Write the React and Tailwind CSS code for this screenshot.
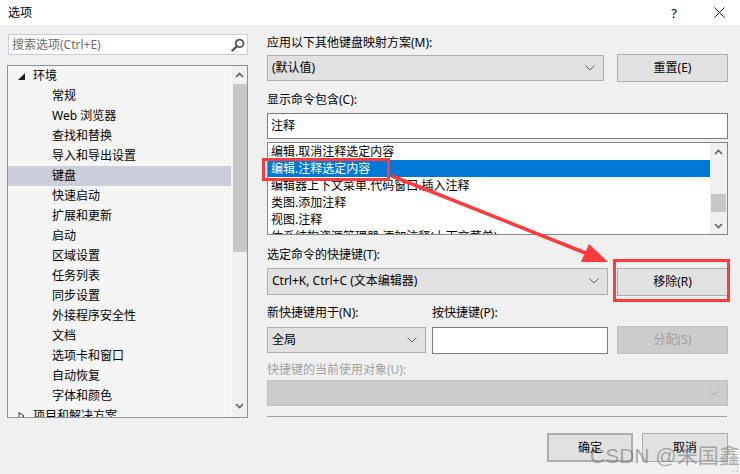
import React from 'react';

const font = { fontFamily: '"Noto Sans", "Noto Sans CJK SC", sans-serif' };

const Chevron = ({ color = '#606060' }) => (
  <svg width="10" height="6" viewBox="0 0 10 6" className="shrink-0">
    <path d="M0.5 0.5 L5 5 L9.5 0.5" fill="none" stroke={color} strokeWidth="1" />
  </svg>
);

const ScrollArrow = ({ up }) => (
  <svg width="9" height="6" viewBox="0 0 9 6">
    <path d={up ? 'M1 5 L4.5 1.5 L8 5' : 'M1 1 L4.5 4.5 L8 1'} fill="none" stroke="#606060" strokeWidth="1.6" />
  </svg>
);

const Select = ({ children, className = '', disabled }) => (
  <div
    className={`flex items-center justify-between pl-[4px] pr-[8px] border ${
      disabled ? 'bg-[#cccccc] border-[#bfbfbf]' : 'bg-[#e1e1e1] border-[#adadad]'
    } ${className}`}
  >
    <span className="text-[12px] leading-[16px] text-black">{children}</span>
    <Chevron color={disabled ? '#a8a8a8' : '#606060'} />
  </div>
);

const Button = ({ children, className = '', disabled }) => (
  <div
    className={`flex items-center justify-center border text-[12px] leading-[16px] ${
      disabled ? 'bg-[#cccccc] border-[#bfbfbf] text-[#a0a0a0]' : 'bg-[#e1e1e1] border-[#adadad] text-black'
    } ${className}`}
  >
    {children}
  </div>
);

const treeChildren = [
  '常规', 'Web 浏览器', '查找和替换', '导入和导出设置', '键盘', '快速启动', '扩展和更新', '启动',
  '区域设置', '任务列表', '同步设置', '外接程序安全性', '文档', '选项卡和窗口', '自动恢复', '字体和颜色',
];

const commands = [
  '编辑.取消注释选定内容',
  '编辑.注释选定内容',
  '编辑器上下文菜单.代码窗口.插入注释',
  '类图.添加注释',
  '视图.注释',
  '体系结构资源管理器.添加注释(上下文菜单)',
];

export default function App() {
  return (
    <div className="relative w-[740px] h-[474px] bg-[#f0f0f0] overflow-hidden text-black" style={font}>
      {/* title bar */}
      <div className="h-[25px] bg-white flex items-center">
        <span className="pl-[8px] text-[12px] leading-[16px]">选项</span>
        <div className="flex-1" />
        <span className="text-[13px] leading-[16px] mr-[37px]">?</span>
        <svg width="11" height="11" viewBox="0 0 11 11" className="mr-[15px]">
          <path d="M0.5 0.5 L10.5 10.5 M10.5 0.5 L0.5 10.5" stroke="#222" strokeWidth="1" />
        </svg>
      </div>

      <div className="flex">
        {/* left column */}
        <div className="w-[249px] pl-[7px] flex flex-col">
          <div className="mt-[9px] ml-[1px] h-[21px] w-[240px] bg-white border border-[#c9ccd6] flex items-center justify-between pl-[3px] pr-[2px]">
            <span className="text-[12px] leading-[16px] text-[#6d6d6d]">搜索选项(Ctrl+E)</span>
            <svg width="14" height="14" viewBox="0 0 14 14">
              <circle cx="8.6" cy="5.4" r="3.8" fill="none" stroke="#555" strokeWidth="1.8" />
              <path d="M6 8 L1.5 12.5" stroke="#555" strokeWidth="2.4" strokeLinecap="round" />
            </svg>
          </div>

          <div className="mt-[10px] h-[353px] w-[241px] border border-[#8e9099] bg-[#f5f5f5] flex overflow-hidden">
            <div className="flex-1 flex flex-col overflow-hidden">
              <div className="h-[20px] shrink-0 flex items-center">
                <svg width="7" height="7" viewBox="0 0 7 7" className="ml-[10px] mr-[8px]">
                  <path d="M7 0 L7 7 L0 7 Z" fill="#222" />
                </svg>
                <span className="text-[12px] leading-[16px]">环境</span>
              </div>
              {treeChildren.map((t) => (
                <div
                  key={t}
                  className={`h-[20px] shrink-0 flex items-center pl-[44px] ${t === '键盘' ? 'bg-[#cccedb]' : ''}`}
                >
                  <span className="text-[12px] leading-[16px]">{t}</span>
                </div>
              ))}
              <div className="h-[20px] shrink-0 flex items-center">
                <svg width="7" height="8" viewBox="0 0 7 8" className="ml-[10px] mr-[8px]">
                  <path d="M1 0.5 L6 4 L1 7.5 Z" fill="none" stroke="#333" strokeWidth="1" />
                </svg>
                <span className="text-[12px] leading-[16px]">项目和解决方案</span>
              </div>
            </div>
            <div className="w-[16px] bg-[#f0f0f0] border-l border-[#f7f7f7] flex flex-col items-center">
              <div className="h-[18px] flex items-center justify-center">
                <ScrollArrow up />
              </div>
              <div className="w-[14px] h-[168px] bg-[#c6c6c6]" />
              <div className="flex-1" />
              <div className="h-[18px] flex items-center justify-center mb-[2px]">
                <ScrollArrow />
              </div>
            </div>
          </div>
        </div>

        {/* right column */}
        <div className="ml-[18px] w-[461px] flex flex-col">
          <div className="mt-[10px] h-[16px] text-[12px] leading-[16px]">应用以下其他键盘映射方案(M):</div>
          <div className="mt-[3px] flex items-center">
            <Select className="w-[337px] h-[26px]">(默认值)</Select>
            <Button className="ml-[13px] w-[111px] h-[28px]">重置(E)</Button>
          </div>

          <div className="mt-[10px] h-[16px] text-[12px] leading-[16px]">显示命令包含(C):</div>
          <div className="mt-[5px] h-[26px] bg-white border border-[#7a7a7a] flex items-center pl-[3px]">
            <span className="text-[12px] leading-[16px]">注释</span>
          </div>

          <div className="mt-[3px] h-[93px] bg-white border border-[#828790] flex overflow-hidden">
            <div className="flex-1 flex flex-col overflow-hidden">
              {commands.map((c, i) => (
                <div
                  key={c}
                  className={`h-[17px] shrink-0 flex items-center pl-[3px] ${i === 1 ? 'bg-[#0078d7] text-white' : ''}`}
                >
                  <span className="text-[12px] leading-[16px] whitespace-nowrap">{c}</span>
                </div>
              ))}
            </div>
            <div className="w-[17px] bg-[#f0f0f0] flex flex-col items-center">
              <div className="h-[17px] flex items-center justify-center">
                <ScrollArrow up />
              </div>
              <div className="mt-[34px] w-[15px] h-[18px] bg-[#c6c6c6]" />
              <div className="flex-1" />
              <div className="h-[17px] flex items-center justify-center">
                <ScrollArrow />
              </div>
            </div>
          </div>

          <div className="mt-[12px] h-[16px] text-[12px] leading-[16px]">选定命令的快捷键(T):</div>
          <div className="mt-[3px] flex items-center">
            <Select className="w-[341px] h-[27px]">Ctrl+K, Ctrl+C (文本编辑器)</Select>
            <Button className="ml-[9px] w-[111px] h-[28px] mt-[2px]">移除(R)</Button>
          </div>

          <div className="mt-[9px] h-[16px] flex text-[12px] leading-[16px]">
            <span className="w-[165px]">新快捷键用于(N):</span>
            <span>按快捷键(P):</span>
          </div>
          <div className="mt-[5px] flex items-center">
            <Select className="w-[159px] h-[26px]">全局</Select>
            <div className="ml-[6px] w-[176px] h-[27px] bg-white border border-[#7a7a7a]" />
            <Button disabled className="ml-[9px] w-[111px] h-[28px]">分配(S)</Button>
          </div>

          <div className="mt-[8px] h-[16px] text-[12px] leading-[16px] text-[#a0a0a0]">快捷键的当前使用对象(U):</div>
          <Select disabled className="mt-[2px] h-[26px]">{''}</Select>

          <div className="mt-[10px] h-[1px] bg-[#a0a0a0] mr-[1px]" />

          <div className="mt-[16px] flex justify-end">
            <Button className="w-[86px] h-[29px] border-[2px] border-[#0078d7]">确定</Button>
            <Button className="ml-[9px] w-[86px] h-[29px]">取消</Button>
          </div>
        </div>
      </div>

      {/* annotations */}
      <div className="absolute left-[262px] top-[158px] w-[128px] h-[23px] border-[3px] border-[#ff3b3b]" />
      <div className="absolute left-[613px] top-[259px] w-[117px] h-[43px] border-[3px] border-[#ff3b3b]" />
      <svg className="absolute left-0 top-0 pointer-events-none" width="740" height="474">
        <path d="M392 176 L588 254" stroke="#ff3b3b" strokeWidth="3.5" />
        <path d="M608 262 L581 262 L589 244 Z" fill="#ff3b3b" />
      </svg>

      {/* watermark */}
      <div
        className="absolute left-[590px] top-[443px] text-[21px] leading-[26px] text-[rgba(110,110,110,0.55)] whitespace-nowrap"
        style={{ fontFamily: '"Liberation Sans", "Noto Sans CJK SC", sans-serif' }}
      >
        CSDN @朱国鑫
      </div>

      {/* resize grip */}
      <svg className="absolute right-[1px] bottom-[1px]" width="6" height="6" viewBox="0 0 6 6">
        <rect x="4" y="0" width="1" height="1" fill="#a0a0a0" />
        <rect x="4" y="4" width="1" height="1" fill="#a0a0a0" />
        <rect x="0" y="4" width="1" height="1" fill="#a0a0a0" />
      </svg>
    </div>
  );
}
